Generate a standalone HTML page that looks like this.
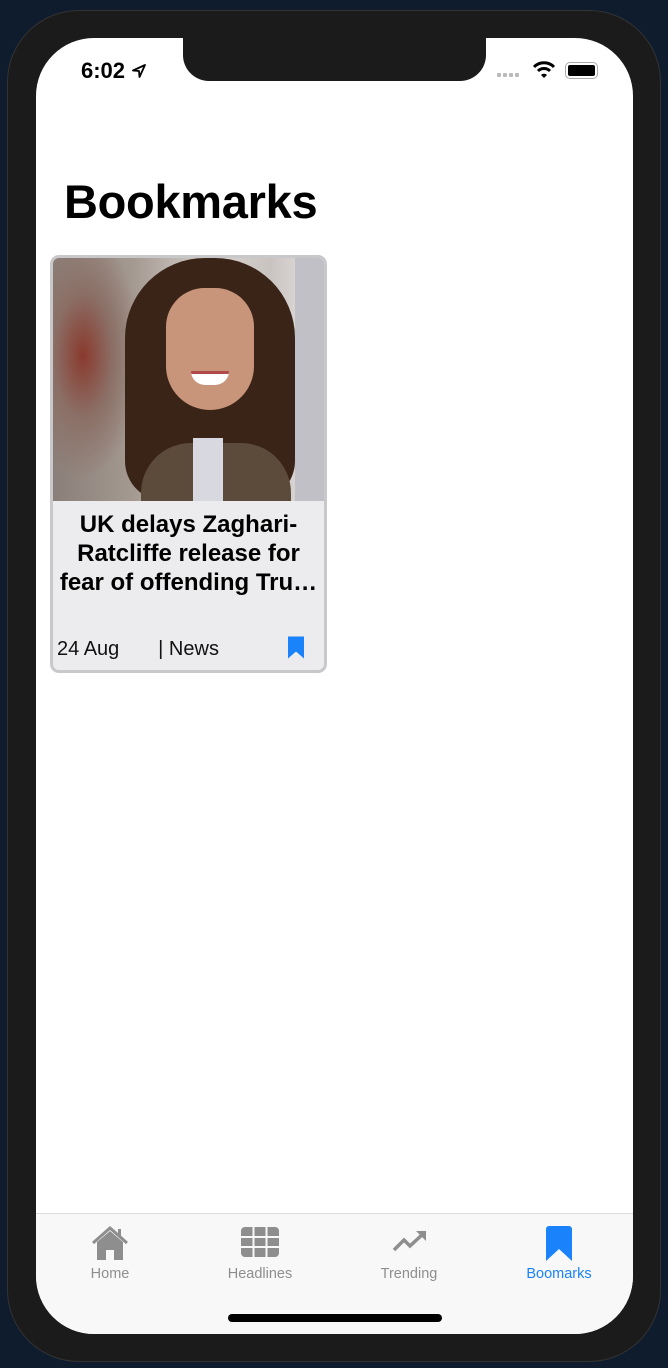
<!DOCTYPE html>
<html><head><meta charset="utf-8"><style>
*{margin:0;padding:0;box-sizing:border-box}
body{width:668px;height:1368px;background:#0f1c2e;position:relative;overflow:hidden;font-family:"Liberation Sans",sans-serif}
.phone{position:absolute;left:7px;top:10px;width:654px;height:1352px;background:#1b1b1b;border-radius:72px;border:1px solid #333}
.screen{position:absolute;left:36px;top:38px;width:597px;height:1296px;background:#fff;border-radius:58px;overflow:hidden}
.notch{position:absolute;left:147px;top:-2px;width:303px;height:45px;background:#1b1b1b;border-radius:0 0 26px 26px}
.time{position:absolute;left:45px;top:20px;font-size:22px;font-weight:600;color:#000}
h1{position:absolute;left:28px;top:136px;font-size:47px;font-weight:bold;letter-spacing:-0.3px}
.card{position:absolute;left:14px;top:217px;width:277px;height:418px;background:#ececee;border:3px solid #c8c8ca;border-radius:9px;overflow:hidden}
.img{position:absolute;left:0;top:0;width:271px;height:243px;background:linear-gradient(90deg,#8a7f78 0%,#a59a92 30%,#d8d4d0 60%,#c9c3c0 80%,#e8e6e6 100%);overflow:hidden}
.title{position:absolute;top:252px;left:-5px;width:281px;text-align:center;font-weight:bold;font-size:24px;line-height:29px;color:#000}
.foot{position:absolute;top:380px;left:4px;font-size:20px;color:#111}
.tab{position:absolute;left:0;top:1175px;width:597px;height:121px;background:#f8f8f8;border-top:1px solid #ddd}
.tl{position:absolute;top:52px;font-size:14.5px;color:#8e8e8e;text-align:center;width:100px}
.home{position:absolute;left:192px;top:1276px;width:214px;height:8px;border-radius:4px;background:#000}
</style></head><body>
<div class="phone"></div>
<div class="screen">
<div class="notch"></div>
<div class="time">6:02 <svg width="16" height="16" viewBox="0 0 16 16" style="vertical-align:-1px"><path d="M14 2L2 7.5 8 8 8.5 14z" fill="none" stroke="#000" stroke-width="1.8" stroke-linejoin="round"/></svg></div>
<div style="position:absolute;left:461px;top:35px;display:flex;gap:2px"><i style="width:4px;height:4px;background:#bbb;border-radius:1px"></i><i style="width:4px;height:4px;background:#bbb;border-radius:1px"></i><i style="width:4px;height:4px;background:#bbb;border-radius:1px"></i><i style="width:4px;height:4px;background:#bbb;border-radius:1px"></i></div>
<svg style="position:absolute;left:497px;top:23px" width="22" height="18" viewBox="0 0 22 18"><path d="M1 6a14 14 0 0 1 20 0" stroke="#000" stroke-width="3" fill="none"/><path d="M5 10a8.5 8.5 0 0 1 12 0" stroke="#000" stroke-width="3" fill="none"/><path d="M8 14l3 3 3-3a4 4 0 0 0-6 0z" fill="#000"/></svg>
<div style="position:absolute;left:529px;top:24px;width:33px;height:17px;border:1.5px solid #aaa;border-radius:5px;padding:2px"><div style="width:100%;height:100%;background:#000;border-radius:2px"></div></div>
<h1>Bookmarks</h1>
<div class="card">
<div class="img">
<div style="position:absolute;left:0;top:0;width:100px;height:243px;background:radial-gradient(ellipse at 30% 40%,#8a3a2e 0,#8b6f66 30%,transparent 60%)"></div>
<div style="position:absolute;left:72px;top:0;width:170px;height:243px;background:#3a2418;border-radius:80px 80px 40px 40px"></div>
<div style="position:absolute;left:113px;top:30px;width:88px;height:122px;background:#c9957a;border-radius:44px 44px 50px 50px"></div>
<div style="position:absolute;left:138px;top:113px;width:38px;height:14px;background:#fff;border-radius:0 0 20px 20px;border-top:3px solid #b04a4a"></div>
<div style="position:absolute;left:88px;top:185px;width:150px;height:58px;background:#5c4a3a;border-radius:50px 50px 0 0"></div>
<div style="position:absolute;left:140px;top:180px;width:30px;height:63px;background:#d8d8e0"></div>
<div style="position:absolute;left:242px;top:0;width:29px;height:243px;background:#c0c0c6"></div>
</div>
<div class="title">UK delays Zaghari-<br>Ratcliffe release for<br>fear of offending Tru…</div>
<div class="foot">24 Aug&nbsp;&nbsp;&nbsp;&nbsp;&nbsp;&nbsp;&nbsp;| News</div>
<svg style="position:absolute;left:235px;top:378px" width="16" height="23" viewBox="0 0 16 22"><path d="M0 0h16v22l-8-7-8 7z" fill="#1a82fb"/></svg>
</div>
<div class="tab">
<svg style="position:absolute;left:55px;top:12px" width="38" height="34" viewBox="0 0 38 34"><path d="M2 17L19 2 36 17" stroke="#8e8e8e" stroke-width="3" fill="none"/><path d="M27 3h3v9l-3-3z" fill="#8e8e8e"/><path d="M6 16L19 5 32 16v18H23V24h-8v10H6z" fill="#8e8e8e"/></svg>
<svg style="position:absolute;left:205px;top:13px" width="38" height="30" viewBox="0 0 38 30"><rect width="38" height="30" rx="4" fill="#8e8e8e"/><path d="M12.5 0v30M25.5 0v30M0 10h38M0 20h38" stroke="#f8f8f8" stroke-width="2"/></svg>
<svg style="position:absolute;left:356px;top:16px" width="36" height="22" viewBox="0 0 36 22"><path d="M2 20l10-10 6 6 14-13" stroke="#8e8e8e" stroke-width="3.5" fill="none"/><path d="M24 1h10v10z" fill="#8e8e8e"/></svg>
<svg style="position:absolute;left:510px;top:12px" width="26" height="35" viewBox="0 0 26 35"><path d="M0 3a3 3 0 0 1 3-3h20a3 3 0 0 1 3 3v32l-13-12-13 12z" fill="#1a82fb"/></svg>
<div class="tl" style="left:24px">Home</div>
<div class="tl" style="left:174px">Headlines</div>
<div class="tl" style="left:323px">Trending</div>
<div class="tl" style="left:473px;color:#1a82fb">Boomarks</div>
</div>
<div class="home"></div>
</div>
</body></html>
